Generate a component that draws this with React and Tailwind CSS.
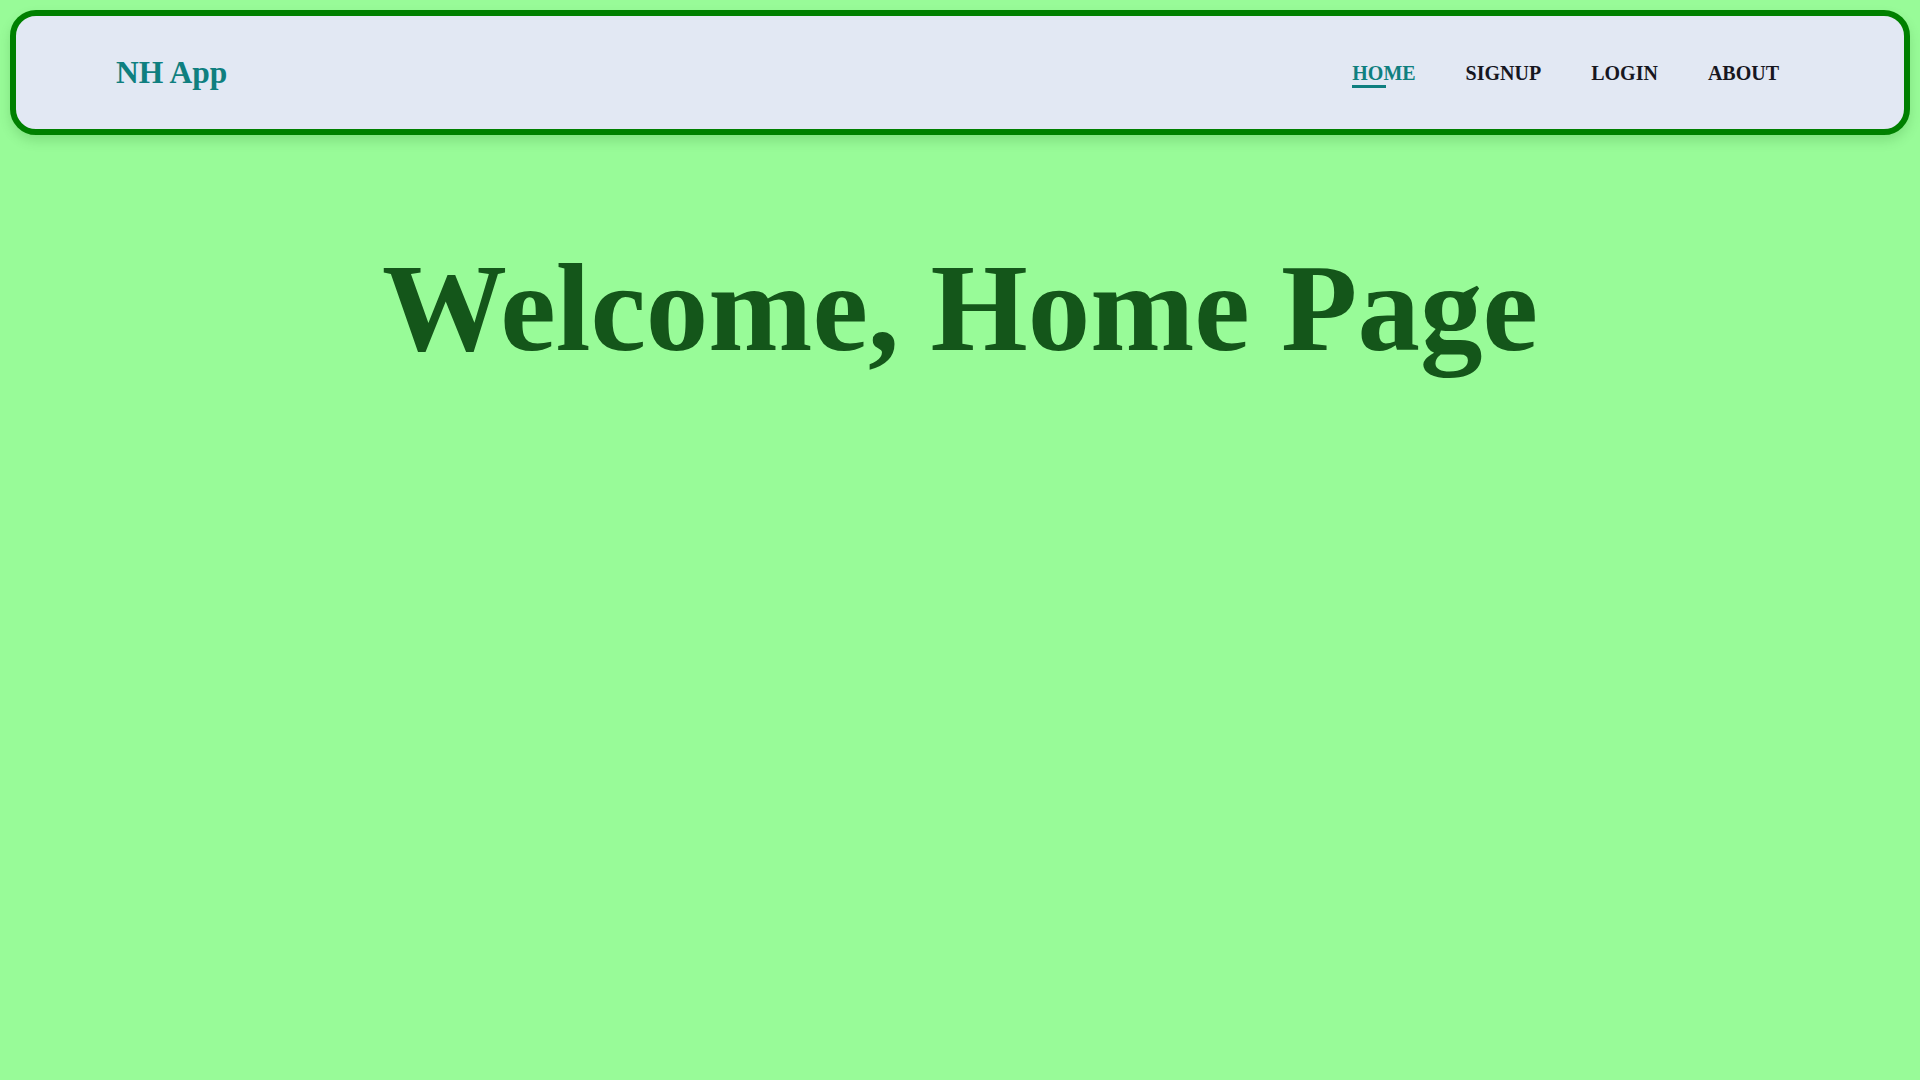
import React from 'react';

const links = ['HOME', 'SIGNUP', 'LOGIN', 'ABOUT'];

const App = () => {
  return (
    <div className="min-h-screen bg-[#98fb98] p-[10px] font-['Liberation_Serif','Times_New_Roman',serif]">
      {/* Navbar */}
      <nav className="h-[125px] flex items-center justify-between bg-[#e2e8f3] border-[6px] border-[#008000] rounded-[26px] shadow-[0_6px_12px_rgba(0,80,0,0.15)] pl-[100px] pr-[100px]">
        <a className="text-[31.5px] font-bold text-[#0f7f7f]">NH App</a>
        <ul className="flex items-center">
          {links.map((l, i) => (
            <li key={l} className="px-[25px]">
              <a className={`relative block text-[20px] font-bold ${i === 0 ? 'text-[#0f7f7f]' : 'text-[#17171f]'}`}>
                {l}
                {i === 0 && <span className="absolute left-0 top-[27px] h-[3px] w-[34px] bg-[#0f7f7f]" />}
              </a>
            </li>
          ))}
        </ul>
      </nav>

      {/* Hero */}
      <h1 className="mt-[80px] text-center text-[125px] font-bold text-[#14561a]">
        Welcome, Home Page
      </h1>
    </div>
  );
};

export default App;
